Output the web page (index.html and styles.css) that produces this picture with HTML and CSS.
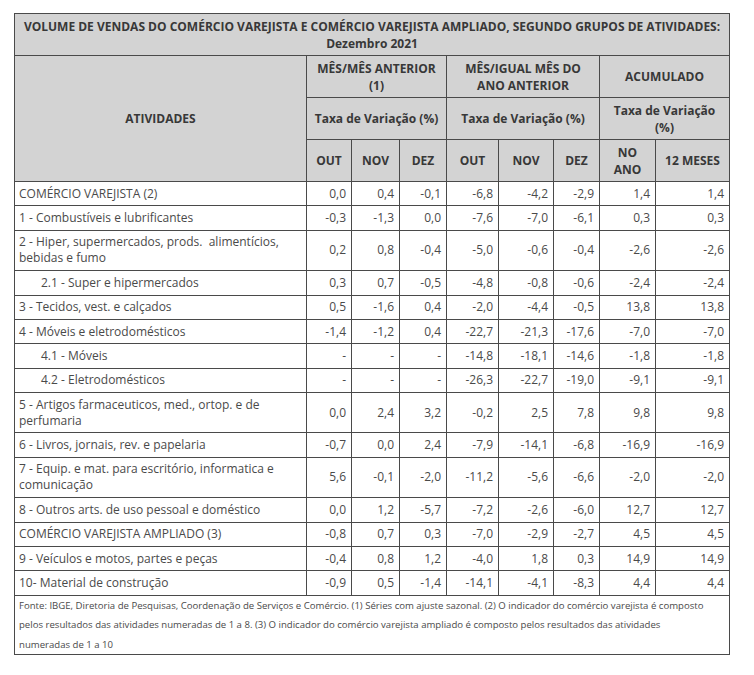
FILE: index.html
```html
<!DOCTYPE html>
<html lang="pt-BR">
<head>
<meta charset="utf-8">
<title>Volume de vendas</title>
<link rel="stylesheet" href="styles.css">
</head>
<body>
<table class="tbl">
  <colgroup>
    <col class="c-atv"><col class="c45"><col class="c48"><col class="c47"><col class="c52"><col class="c55"><col class="c46"><col class="c56"><col class="c73">
  </colgroup>
  <thead>
    <tr><th colspan="9" class="title">VOLUME DE VENDAS DO COMÉRCIO VAREJISTA E COMÉRCIO VAREJISTA AMPLIADO, SEGUNDO GRUPOS DE ATIVIDADES:<br>Dezembro 2021</th></tr>
    <tr>
      <th rowspan="3">ATIVIDADES</th>
      <th colspan="3">MÊS/MÊS ANTERIOR (1)</th>
      <th colspan="3" class="narrow">MÊS/IGUAL MÊS DO ANO ANTERIOR</th>
      <th colspan="2">ACUMULADO</th>
    </tr>
    <tr>
      <th colspan="3">Taxa de Variação (%)</th>
      <th colspan="3">Taxa de Variação (%)</th>
      <th colspan="2">Taxa de Variação (%)</th>
    </tr>
    <tr>
      <th>OUT</th><th>NOV</th><th>DEZ</th>
      <th>OUT</th><th>NOV</th><th>DEZ</th>
      <th>NO ANO</th><th>12 MESES</th>
    </tr>
  </thead>
  <tbody>
    <tr><td class="lbl">COMÉRCIO VAREJISTA (2)</td><td>0,0</td><td>0,4</td><td>-0,1</td><td>-6,8</td><td>-4,2</td><td>-2,9</td><td>1,4</td><td>1,4</td></tr>
    <tr><td class="lbl">1 - Combustíveis e lubrificantes</td><td>-0,3</td><td>-1,3</td><td>0,0</td><td>-7,6</td><td>-7,0</td><td>-6,1</td><td>0,3</td><td>0,3</td></tr>
    <tr><td class="lbl">2 - Hiper, supermercados, prods.&nbsp; alimentícios, bebidas e fumo</td><td>0,2</td><td>0,8</td><td>-0,4</td><td>-5,0</td><td>-0,6</td><td>-0,4</td><td>-2,6</td><td>-2,6</td></tr>
    <tr><td class="lbl sub">2.1 - Super e hipermercados</td><td>0,3</td><td>0,7</td><td>-0,5</td><td>-4,8</td><td>-0,8</td><td>-0,6</td><td>-2,4</td><td>-2,4</td></tr>
    <tr><td class="lbl">3 - Tecidos, vest. e calçados</td><td>0,5</td><td>-1,6</td><td>0,4</td><td>-2,0</td><td>-4,4</td><td>-0,5</td><td>13,8</td><td>13,8</td></tr>
    <tr><td class="lbl">4 - Móveis e eletrodomésticos</td><td>-1,4</td><td>-1,2</td><td>0,4</td><td>-22,7</td><td>-21,3</td><td>-17,6</td><td>-7,0</td><td>-7,0</td></tr>
    <tr><td class="lbl sub">4.1 - Móveis</td><td>-</td><td>-</td><td>-</td><td>-14,8</td><td>-18,1</td><td>-14,6</td><td>-1,8</td><td>-1,8</td></tr>
    <tr><td class="lbl sub">4.2 - Eletrodomésticos</td><td>-</td><td>-</td><td>-</td><td>-26,3</td><td>-22,7</td><td>-19,0</td><td>-9,1</td><td>-9,1</td></tr>
    <tr><td class="lbl">5 - Artigos farmaceuticos, med., ortop. e de perfumaria</td><td>0,0</td><td>2,4</td><td>3,2</td><td>-0,2</td><td>2,5</td><td>7,8</td><td>9,8</td><td>9,8</td></tr>
    <tr><td class="lbl">6 - Livros, jornais, rev. e papelaria</td><td>-0,7</td><td>0,0</td><td>2,4</td><td>-7,9</td><td>-14,1</td><td>-6,8</td><td>-16,9</td><td>-16,9</td></tr>
    <tr><td class="lbl">7 - Equip. e mat. para escritório, informatica e comunicação</td><td>5,6</td><td>-0,1</td><td>-2,0</td><td>-11,2</td><td>-5,6</td><td>-6,6</td><td>-2,0</td><td>-2,0</td></tr>
    <tr><td class="lbl">8 - Outros arts. de uso pessoal e doméstico</td><td>0,0</td><td>1,2</td><td>-5,7</td><td>-7,2</td><td>-2,6</td><td>-6,0</td><td>12,7</td><td>12,7</td></tr>
    <tr><td class="lbl">COMÉRCIO VAREJISTA AMPLIADO (3)</td><td>-0,8</td><td>0,7</td><td>0,3</td><td>-7,0</td><td>-2,9</td><td>-2,7</td><td>4,5</td><td>4,5</td></tr>
    <tr><td class="lbl">9 - Veículos e motos, partes e peças</td><td>-0,4</td><td>0,8</td><td>1,2</td><td>-4,0</td><td>1,8</td><td>0,3</td><td>14,9</td><td>14,9</td></tr>
    <tr><td class="lbl">10- Material de construção</td><td>-0,9</td><td>0,5</td><td>-1,4</td><td>-14,1</td><td>-4,1</td><td>-8,3</td><td>4,4</td><td>4,4</td></tr>
  </tbody>
  <tfoot>
    <tr><td colspan="9" class="note">Fonte: IBGE, Diretoria de Pesquisas, Coordenação de Serviços e Comércio. (1) Séries com ajuste sazonal. (2) O indicador do comércio varejista é composto pelos resultados das atividades numeradas de 1 a 8. (3) O indicador do comércio varejista ampliado é composto pelos resultados das atividades numeradas de 1 a 10</td></tr>
  </tfoot>
</table>
</body>
</html>
```

FILE: styles.css
```css
html, body {
  margin: 0;
  padding: 0;
  background: #ffffff;
}

body {
  font-family: "Open Sans", "DejaVu Sans", sans-serif;
  color: #4a4a4a;
  font-size: 12px;
}

.tbl {
  margin: 13px 0 0 14px;
  border-collapse: collapse;
  table-layout: fixed;
  width: 715px;
}

.c-atv { width: 292px; }
.c45 { width: 45px; }
.c48 { width: 48px; }
.c47 { width: 47px; }
.c52 { width: 52px; }
.c55 { width: 55px; }
.c46 { width: 46px; }
.c56 { width: 56px; }
.c73 { width: 74px; }

.tbl th,
.tbl td {
  border: 1px solid #4a4a4a;
}

.tbl th {
  background: #d3d3d3;
  color: #383838;
  font-weight: 700;
  font-size: 12px;
  line-height: 17px;
  padding: 3.5px 5px;
  height: 34px;
  text-align: center;
  vertical-align: middle;
}

.tbl th.title {
  padding: 3.5px 4px;
}

.tbl th.narrow {
  padding: 3.5px 14px;
}

.tbl td {
  line-height: 16px;
  padding: 3.7px 5px;
  text-align: right;
  vertical-align: middle;
}

.tbl td.lbl {
  text-align: left;
  padding-left: 4px;
}

.tbl td.sub {
  padding-left: 26px;
}

.tbl td.note {
  text-align: left;
  font-size: 9.6px;
  line-height: 19.6px;
  padding: 0 20px 0 4px;
}
```
